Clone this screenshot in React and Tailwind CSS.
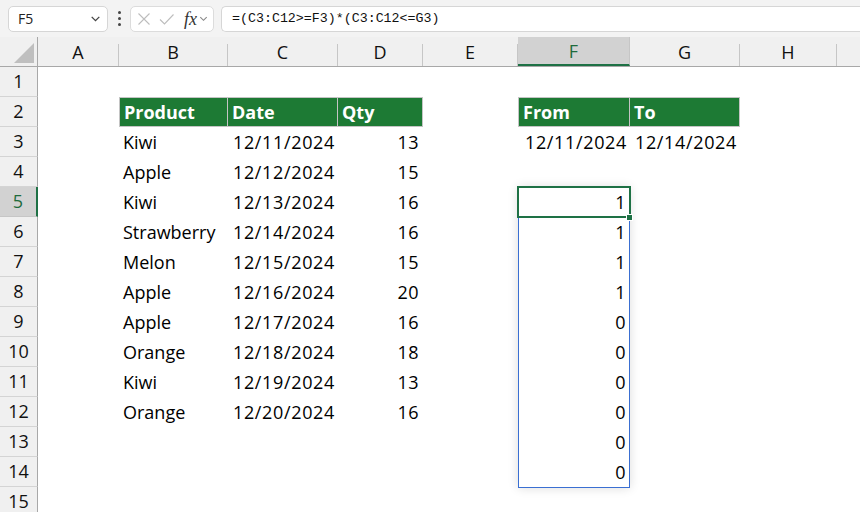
import React from "react";

const FONT = { fontFamily: '"Open Sans", "Noto Sans", sans-serif' };

const cols = [
  { k: "A", w: "w-[81px]" },
  { k: "B", w: "w-[109px]" },
  { k: "C", w: "w-[110px]" },
  { k: "D", w: "w-[85px]" },
  { k: "E", w: "w-[95px]" },
  { k: "F", w: "w-[112px]" },
  { k: "G", w: "w-[110px]" },
  { k: "H", w: "w-[97px]" },
  { k: "I", w: "w-[90px]" },
];

const data = {
  2: { B: ["Product", "h"], C: ["Date", "h"], D: ["Qty", "h"], F: ["From", "h"], G: ["To", "h"] },
  3: { B: ["Kiwi"], C: ["12/11/2024", "d"], D: ["13", "r"], F: ["12/11/2024", "d"], G: ["12/14/2024", "d"] },
  4: { B: ["Apple"], C: ["12/12/2024", "d"], D: ["15", "r"] },
  5: { B: ["Kiwi"], C: ["12/13/2024", "d"], D: ["16", "r"], F: ["1", "r"] },
  6: { B: ["Strawberry"], C: ["12/14/2024", "d"], D: ["16", "r"], F: ["1", "r"] },
  7: { B: ["Melon"], C: ["12/15/2024", "d"], D: ["15", "r"], F: ["1", "r"] },
  8: { B: ["Apple"], C: ["12/16/2024", "d"], D: ["20", "r"], F: ["1", "r"] },
  9: { B: ["Apple"], C: ["12/17/2024", "d"], D: ["16", "r"], F: ["0", "r"] },
  10: { B: ["Orange"], C: ["12/18/2024", "d"], D: ["18", "r"], F: ["0", "r"] },
  11: { B: ["Kiwi"], C: ["12/19/2024", "d"], D: ["13", "r"], F: ["0", "r"] },
  12: { B: ["Orange"], C: ["12/20/2024", "d"], D: ["16", "r"], F: ["0", "r"] },
  13: { F: ["0", "r"] },
  14: { F: ["0", "r"] },
  15: {},
  1: {},
};

function Chevron({ className }) {
  return (
    <svg viewBox="0 0 12 12" className={className} fill="none" stroke="currentColor" strokeWidth="1.2">
      <path d="M2.5 4.5 L6 8 L9.5 4.5" />
    </svg>
  );
}

function Cell({ col, row }) {
  const d = data[row] && data[row][col.k];
  if (!d) return <div className={`${col.w} h-full shrink-0`} />;
  const [text, kind] = d;
  if (kind === "h") {
    const first = col.k === "B" || col.k === "F";
    return (
      <div
        className={`${col.w} h-full shrink-0 bg-[#1d7a34] text-white font-bold flex items-center pl-[4px] border-t border-b border-r border-[#c4c4c4] ${first ? "border-l" : ""}`}
      >
        {text}
      </div>
    );
  }
  if (kind === "r") {
    return (
      <div className={`${col.w} h-full shrink-0 flex items-center justify-end pr-[4px] text-black tracking-[0.4px]`}>{text}</div>
    );
  }
  if (kind === "d") {
    return (
      <div className={`${col.w} h-full shrink-0 flex items-center justify-end pr-[3px] text-black tracking-[0.65px]`}>{text}</div>
    );
  }
  return (
    <div className={`${col.w} h-full shrink-0 flex items-center pl-[4px] text-black`}>{text}</div>
  );
}

export default function App() {
  const rows = Array.from({ length: 15 }, (_, i) => i + 1);
  return (
    <div className="w-[860px] h-[512px] overflow-hidden bg-white relative text-[18px]" style={FONT}>
      {/* formula bar */}
      <div className="h-[37px] bg-[#f3f3f3] flex items-center">
        <div className="ml-[8px] w-[100px] h-[26px] bg-white border border-[#d6d6d6] rounded-[5px] flex items-center justify-between pl-[9px] pr-[5px] text-[14px] text-[#222]">
          <span>F5</span>
          <Chevron className="w-[13px] h-[13px] text-[#444]" />
        </div>
        <div className="w-[22px] flex flex-col items-center gap-[3px]">
          <span className="w-[3px] h-[3px] rounded-full bg-[#444]" />
          <span className="w-[3px] h-[3px] rounded-full bg-[#444]" />
          <span className="w-[3px] h-[3px] rounded-full bg-[#444]" />
        </div>
        <div className="w-[84px] h-[26px] bg-white border border-[#dcdcdc] rounded-[5px] flex items-center pl-[5px]">
          <svg viewBox="0 0 16 16" className="w-[16px] h-[16px]" fill="none" stroke="#bdbdbd" strokeWidth="1.1">
            <path d="M2.5 2.5 L13.5 13.5 M13.5 2.5 L2.5 13.5" />
          </svg>
          <svg viewBox="0 0 16 16" className="w-[17px] h-[16px] ml-[6px]" fill="none" stroke="#bdbdbd" strokeWidth="1.1">
            <path d="M1.5 8.5 L6 13 L15 3.5" />
          </svg>
          <span
            className="ml-[9px] text-[18px] italic text-[#333] leading-none"
            style={{ fontFamily: '"Liberation Serif", serif' }}
          >
            fx
          </span>
          <Chevron className="w-[11px] h-[11px] text-[#888] ml-[1px]" />
        </div>
        <div className="ml-[7px] flex-1 h-[26px] bg-white border border-[#d6d6d6] rounded-l-[5px] border-r-0 flex items-center pl-[10px]">
          <span className="text-[13.3px] text-[#111]" style={{ fontFamily: '"Liberation Mono", monospace' }}>
            =(C3:C12&gt;=F3)*(C3:C12&lt;=G3)
          </span>
        </div>
      </div>

      {/* column header */}
      <div className="h-[30px] bg-[#f0f0f0] flex border-b border-[#a8a8a8]">
        <div className="w-[38px] h-full shrink-0 border-r border-[#a8a8a8] flex items-end justify-end pr-[3px] pb-[3px]">
          <svg viewBox="0 0 20 20" className="w-[20px] h-[20px]">
            <polygon points="20,0 20,20 0,20" fill="#bfbfbf" />
          </svg>
        </div>
        {cols.map((c) =>
          c.k === "F" ? (
            <div
              key={c.k}
              className={`${c.w} h-full shrink-0 bg-[#d2d2d2] border-b-2 border-[#1e7145] border-r border-r-[#c6c6c6] flex items-center justify-center text-[#1e6b3c] pt-[2px]`}
            >
              {c.k}
            </div>
          ) : (
            <div
              key={c.k}
              className={`${c.w} h-full shrink-0 flex items-center justify-center text-[#111] pt-[1px]`}
            >
              <span className="flex-1 text-center">{c.k === "I" ? "" : c.k}</span>
              <span className="w-px h-[22px] self-end bg-[#c6c6c6]" />
            </div>
          )
        )}
      </div>

      {/* rows */}
      <div className="relative">
        {rows.map((r) => (
          <div key={r} className="h-[30px] flex">
            {r === 5 ? (
              <div className="w-[38px] h-full shrink-0 bg-[#d2d2d2] border-r-2 border-[#1e7145] border-b border-b-[#c6c6c6] flex items-center justify-center text-[#1e6b3c]">
                {r}
              </div>
            ) : (
              <div className="w-[38px] h-full shrink-0 bg-[#f0f0f0] border-r border-[#a8a8a8] border-b border-b-[#d4d4d4] flex items-center justify-center text-[#111]">
                {r}
              </div>
            )}
            {cols.map((c) => (
              <Cell key={c.k} col={c} row={r} />
            ))}
          </div>
        ))}

        {/* spill range */}
        <div className="absolute left-[518px] top-[120px] w-[112px] h-[301px] border border-[#3a6fd2] shadow-[0_0_10px_rgba(0,0,0,0.14)] pointer-events-none" />
        {/* active cell */}
        <div className="absolute left-[517px] top-[119px] w-[114px] h-[32px] border-2 border-[#1e7145] pointer-events-none" />
        <div className="absolute left-[626px] top-[147px] w-[7px] h-[7px] bg-[#1e7145] border border-white pointer-events-none" />
      </div>
    </div>
  );
}
